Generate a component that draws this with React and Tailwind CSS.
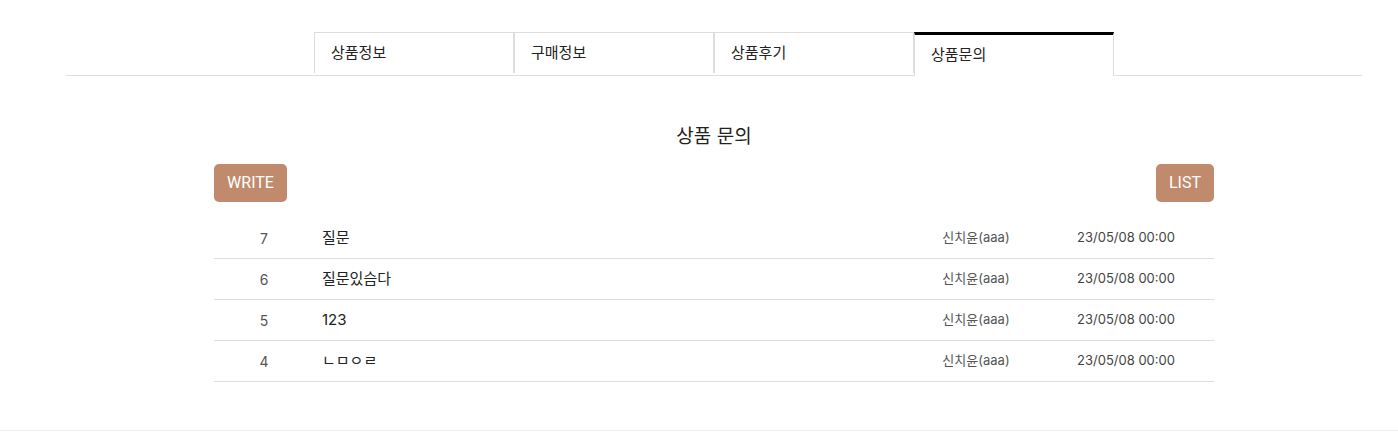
export default function App() {
  const font = { fontFamily: 'Inter, "Noto Sans CJK KR", sans-serif' };
  const tabs = ["상품정보", "구매정보", "상품후기", "상품문의"];
  const rows = [
    { no: 7, title: "질문" },
    { no: 6, title: "질문있슴다" },
    { no: 5, title: "123" },
    { no: 4, title: "ㄴㅁㅇㄹ" },
  ];
  return (
    <div className="w-[1398px] h-[438px] bg-white overflow-hidden" style={font}>
      <div className="ml-[66px] w-[1296px] pt-[32px]">
        <div className="flex justify-center items-end border-b border-[#dedede]">
          {tabs.map((t, i) =>
            i === 3 ? (
              <div
                key={t}
                className="w-[200px] h-[44px] mb-[-1px] bg-white border-t-[3px] border-t-black border-x border-x-[#dddddd] pl-[16px] flex items-center text-[15px] text-[#222]"
              >
                {t}
              </div>
            ) : (
              <div
                key={t}
                className="w-[200px] h-[41px] mb-[2px] border border-b-0 border-[#dddddd] pl-[16px] flex items-center text-[15px] text-[#222]"
              >
                {t}
              </div>
            )
          )}
        </div>
        <div className="w-[1000px] mx-auto">
          <div className="mt-[48px] h-[27px] flex items-center justify-center text-[19px] text-[#222]">
            상품 문의
          </div>
          <div className="mt-[13px] flex justify-between">
            <button
              className="h-[38px] w-[73px] rounded-[5px] bg-[#c08b6c] text-white text-[16px] flex items-center justify-center"
              style={{ fontFamily: 'Roboto, sans-serif' }}
            >
              WRITE
            </button>
            <button
              className="h-[38px] w-[58px] rounded-[5px] bg-[#c08b6c] text-white text-[16px] flex items-center justify-center"
              style={{ fontFamily: 'Roboto, sans-serif' }}
            >
              LIST
            </button>
          </div>
          <div className="mt-[16px]">
            {rows.map((r) => (
              <div key={r.no} className="h-[41px] border-b border-[#dddddd] flex items-center">
                <div className="w-[100px] text-center text-[14px] text-[#555]">{r.no}</div>
                <div className="flex-1 pl-[8px] text-[15px] text-[#222]">{r.title}</div>
                <div className="w-[124px] text-center text-[13px] text-[#555]">신치윤(aaa)</div>
                <div className="w-[176px] text-center text-[13px] text-[#444]">23/05/08 00:00</div>
              </div>
            ))}
          </div>
        </div>
      </div>
      <div className="mt-[48px] border-t border-[#eeeeee]" />
    </div>
  );
}
